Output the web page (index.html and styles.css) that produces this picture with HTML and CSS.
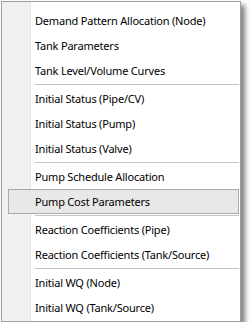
FILE: index.html
```html
<!DOCTYPE html>
<html>
<head>
<meta charset="utf-8">
<link rel="stylesheet" href="styles.css">
</head>
<body>
<div class="menu">
  <div class="item">Demand Pattern Allocation (Node)</div>
  <div class="item">Tank Parameters</div>
  <div class="item">Tank Level/Volume Curves</div>
  <div class="sep"></div>
  <div class="item">Initial Status (Pipe/CV)</div>
  <div class="item">Initial Status (Pump)</div>
  <div class="item">Initial Status (Valve)</div>
  <div class="sep"></div>
  <div class="item">Pump Schedule Allocation</div>
  <div class="item active">Pump Cost Parameters</div>
  <div class="sep"></div>
  <div class="item">Reaction Coefficients (Pipe)</div>
  <div class="item">Reaction Coefficients (Tank/Source)</div>
  <div class="sep"></div>
  <div class="item">Initial WQ (Node)</div>
  <div class="item">Initial WQ (Tank/Source)</div>
</div>
</body>
</html>
```
FILE: styles.css
```css
html, body {
  margin: 0;
  padding: 0;
  background: #ffffff;
}
body {
  padding: 1px 0 0 1px;
}
.menu {
  box-sizing: border-box;
  width: 240px;
  height: 321px;
  border: 1px solid #a0a0a0;
  padding: 6px 1px 0 0;
  background: linear-gradient(to right, #f0f0f0 0, #f0f0f0 28px, #e6e6e6 28px, #e6e6e6 29px, #ffffff 29px);
  box-shadow: 4px 4px 5px rgba(0, 0, 0, 0.5);
  font-family: "Noto Sans", "DejaVu Sans", sans-serif;
  font-size: 11px;
  letter-spacing: -0.2px;
  color: #000000;
  display: flex;
  flex-direction: column;
}
.item {
  box-sizing: border-box;
  height: 25px;
  line-height: 23px;
  padding-left: 32px;
  border: 1px solid transparent;
  white-space: nowrap;
}
.item.active {
  margin-left: 6px;
  padding-left: 26px;
  background: #e8e8e8;
  border-color: #aaaaaa;
}
.sep {
  box-sizing: border-box;
  margin-left: 33px;
  margin-top: 1px;
  height: 2px;
  border-top: 1px solid #c4c4c4;
}
```
